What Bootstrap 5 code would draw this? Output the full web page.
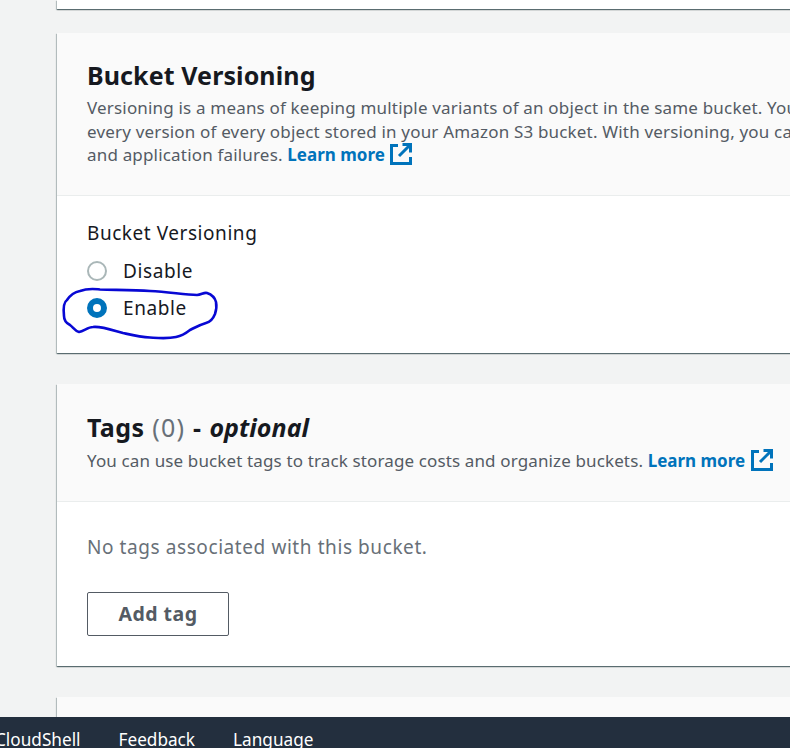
<!DOCTYPE html>
<html lang="en">
<head>
<meta charset="utf-8">
<title>Bucket settings</title>
<link rel="stylesheet" href="https://cdn.jsdelivr.net/npm/bootstrap@5.3.0/dist/css/bootstrap.min.css">
<style>
html, body { margin: 0; height: 748px; overflow: hidden; }
body { background: #f2f3f3; font-family: "Noto Sans", "Open Sans", sans-serif; color: #16191f; position: relative; }
.page-shell { height: 748px; }
.page-scroll { overflow: hidden; padding-left: 57px; min-height: 0; }
.panel { border: 0; border-radius: 0; background: #fff; margin-right: -60px; margin-bottom: 31px;
  box-shadow: 0 1px 1px 0 rgba(0,28,36,.45), 1px 1px 1px 0 rgba(0,28,36,.15), -1px 1px 1px 0 rgba(0,28,36,.2); }
.panel-top { height: 9px; margin-bottom: 24px; }
.panel-head { background: #fafafa; border-bottom: 1px solid #eaeded; border-radius: 0 !important; padding: 0 0 0 30px; }
.head-a { height: 163px; padding-top: 25px; }
.head-b { height: 118px; padding-top: 26px; }
.head-c { height: 60px; }
.panel-title { font-size: 25px; line-height: 34px; font-weight: 700; margin: 0; color: #16191f; letter-spacing: .1px; }
.head-b .panel-title { letter-spacing: .4px; word-spacing: 1px; }
.panel-title .cnt { font-weight: 400; color: #687078; letter-spacing: 1.2px; }
.panel-title em { font-weight: 700; letter-spacing: .05px; }
.panel-desc { font-size: 17px; line-height: 23.5px; letter-spacing: .18px; color: #545b64; white-space: nowrap; margin: 4px 0 0; }
.head-b .panel-desc { margin-top: 5px; letter-spacing: .13px; }
.ext-link { color: #0073bb; font-weight: 700; text-decoration: none; letter-spacing: 0; }
.ext-link svg { vertical-align: -4px; margin-left: 1px; }
.body-a { padding: 24px 0 0 30px; height: 157px; }
.body-b { padding: 32px 0 0 30px; height: 164px; }
.field-label { font-size: 19px; line-height: 27px; letter-spacing: .55px; margin-bottom: 11px; color: #16191f; }
.radio-row { font-size: 19px; line-height: 27px; letter-spacing: .6px; min-height: 0; padding-left: 36px; margin-bottom: 10px; color: #16191f; }
.radio-row .form-check-input { width: 20px; height: 20px; margin-top: 3px; margin-left: -36px; border: 2px solid #aab7b8; }
.radio-row .form-check-input:checked { background-color: #fff; border: 6px solid #0073bb; background-image: none; }
.empty-note { font-size: 19px; line-height: 27px; letter-spacing: .58px; color: #687078; margin: 0 0 31px; }
.btn-add { width: 142px; height: 44px; border: 1px solid #545b64; border-radius: 2px; background: #fff; color: #545b64;
  font-weight: 700; font-size: 19.5px; letter-spacing: .5px; padding: 0; }
.foot-bar { height: 31px; flex: none; background: #232f3e; color: #fff; overflow: hidden; font-size: 17.2px; line-height: 24px; padding-top: 11px; gap: 38px; }
.foot-bar span { white-space: nowrap; }
.foot-first { margin-left: -5px; }
.scribble { position: absolute; left: 0; top: 0; pointer-events: none; }
</style>
</head>
<body>
<div class="page-shell d-flex flex-column">
  <div class="page-scroll flex-grow-1">
    <div class="card panel panel-top"></div>

    <div class="card panel">
      <div class="card-header panel-head head-a">
        <h2 class="panel-title">Bucket Versioning</h2>
        <p class="panel-desc">Versioning is a means of keeping multiple variants of an object in the same bucket. You can use versioning<br>every version of every object stored in your Amazon S3 bucket. With versioning, you can recover more<br>and application failures. <a href="#" class="ext-link">Learn more <svg width="22" height="22" viewBox="0 0 22 22" fill="none" stroke="#0073bb" stroke-width="3"><path d="M8 2.500H1.500v18h19V14"/><path d="M12.500 1.500h8v8"/><path d="M20 2 9 13"/></svg></a></p>
      </div>
      <div class="card-body body-a">
        <div class="field-label">Bucket Versioning</div>
        <div class="form-check radio-row"><input class="form-check-input" type="radio" name="ver" id="v1"><label class="form-check-label" for="v1">Disable</label></div>
        <div class="form-check radio-row"><input class="form-check-input" type="radio" name="ver" id="v2" checked><label class="form-check-label" for="v2">Enable</label></div>
      </div>
    </div>

    <div class="card panel">
      <div class="card-header panel-head head-b">
        <h2 class="panel-title">Tags <span class="cnt">(0)</span> - <em>optional</em></h2>
        <p class="panel-desc">You can use bucket tags to track storage costs and organize buckets. <a href="#" class="ext-link">Learn more <svg width="22" height="22" viewBox="0 0 22 22" fill="none" stroke="#0073bb" stroke-width="3"><path d="M8 2.500H1.500v18h19V14"/><path d="M12.500 1.500h8v8"/><path d="M20 2 9 13"/></svg></a></p>
      </div>
      <div class="card-body body-b">
        <p class="empty-note">No tags associated with this bucket.</p>
        <button type="button" class="btn btn-add">Add tag</button>
      </div>
    </div>

    <div class="card panel">
      <div class="card-header panel-head head-c"></div>
    </div>
  </div>
  <div class="foot-bar d-flex">
    <span class="foot-first">CloudShell</span>
    <span>Feedback</span>
    <span>Language</span>
  </div>
</div>
<svg class="scribble" width="790" height="748" viewBox="0 0 790 748" fill="none" stroke="#0808d4" stroke-width="2.600" stroke-linecap="round" stroke-linejoin="round" aria-hidden="true">
  <path d="M64 316C63 307 64 302 67 300C71 294 75 292 80 291C88 288 94 289 100 289.500C120 290 135 290 150 291C170 292 185 295 197 295C201 295 204 292 207 293C213 295 215 298 216 302C217 307 216 311 215 314C213 319 210 322 206 323C199 325 194 328 190 330C185 334 181 336 176 337C167 339 158 338 150 337.500C140 337 132 335 123 333C112 330 101 326 93 327C88 327 84 331 79 332C75 331 73 327 70 325C66 323 64 320 64 316Z"/>
</svg>
</body>
</html>
